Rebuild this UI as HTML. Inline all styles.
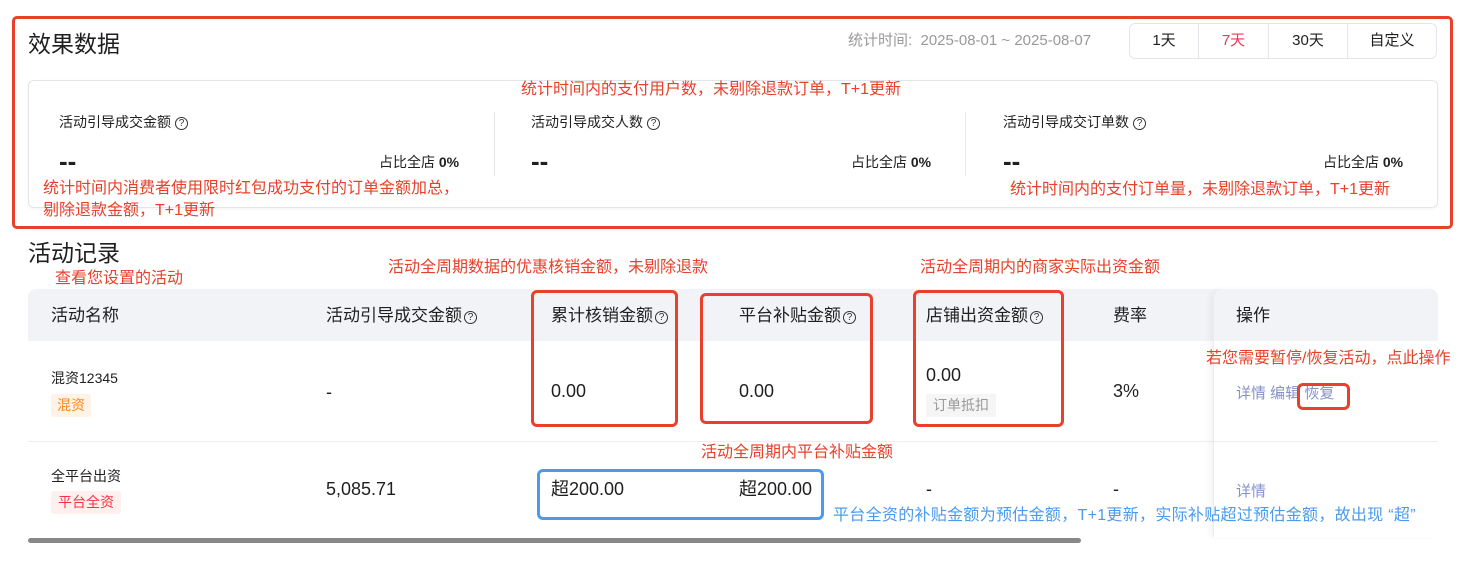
<!DOCTYPE html>
<html><head><meta charset="utf-8">
<style>
*{margin:0;padding:0;box-sizing:border-box}
body{width:1477px;height:563px;background:#fff;position:relative;overflow:hidden;font-family:"Liberation Sans","Noto Sans CJK SC",sans-serif;color:#1f1f1f}
.a{position:absolute;white-space:nowrap;line-height:1}
.red{color:#e8402a;font-size:16px}
.blue{color:#4a9af0;font-size:16px}
.q{display:inline-block;width:13px;height:13px;border:1px solid #333;border-radius:50%;font-size:10px;line-height:11px;text-align:center;vertical-align:1px;margin-left:4px;color:#333}
.rb{position:absolute;border:3px solid #e8402a;border-radius:6px}
.h{font-size:16px;top:307px}
.n{font-size:18px}
.lk{color:#8592c7;font-size:15px}
</style></head><body>
<div class="a" style="left:28px;top:33px;font-size:23px">效果数据</div>
<div class="a" style="left:848px;top:33px;font-size:15px;color:#999">统计时间:&nbsp; 2025-08-01 ~ 2025-08-07</div>
<div style="position:absolute;left:1129px;top:23px;width:308px;height:36px;border:1px solid #e5e6eb;border-radius:6px;display:flex;font-size:15px">
<div style="width:69px;text-align:center;line-height:34px;border-right:1px solid #e5e6eb">1天</div>
<div style="width:70px;text-align:center;line-height:34px;border-right:1px solid #e5e6eb;color:#f5335a">7天</div>
<div style="width:79px;text-align:center;line-height:34px;border-right:1px solid #e5e6eb">30天</div>
<div style="flex:1;text-align:center;line-height:34px">自定义</div>
</div>
<div style="position:absolute;left:28px;top:80px;width:1410px;height:128px;border:1px solid #e3e5ea;border-radius:6px;box-shadow:0 1px 3px rgba(0,0,0,.05)"></div>
<div style="position:absolute;left:494px;top:112px;width:1px;height:64px;background:#e8e8e8"></div>
<div style="position:absolute;left:965px;top:112px;width:1px;height:64px;background:#e8e8e8"></div>
<div class="a" style="left:59px;top:115px;font-size:14px">活动引导成交金额<span class="q">?</span></div>
<div class="a" style="left:531px;top:115px;font-size:14px">活动引导成交人数<span class="q">?</span></div>
<div class="a" style="left:1003px;top:115px;font-size:14px">活动引导成交订单数<span class="q">?</span></div>
<div class="a" style="left:59px;top:148px;font-size:26px;font-weight:bold">--</div>
<div class="a" style="left:531px;top:148px;font-size:26px;font-weight:bold">--</div>
<div class="a" style="left:1003px;top:148px;font-size:26px;font-weight:bold">--</div>
<div class="a" style="left:379px;top:155px;font-size:14px">占比全店 <b>0%</b></div>
<div class="a" style="left:851px;top:155px;font-size:14px">占比全店 <b>0%</b></div>
<div class="a" style="left:1323px;top:155px;font-size:14px">占比全店 <b>0%</b></div>
<div class="a red" style="left:521px;top:82px">统计时间内的支付用户数，未剔除退款订单，T+1更新</div>
<div class="a red" style="left:43px;top:181px">统计时间内消费者使用限时红包成功支付的订单金额加总，</div>
<div class="a red" style="left:43px;top:203px">剔除退款金额，T+1更新</div>
<div class="a red" style="left:1010px;top:182px">统计时间内的支付订单量，未剔除退款订单，T+1更新</div>
<div style="position:absolute;left:12px;top:16px;width:1441px;height:213px;border:3px solid #e8402a;border-radius:5px"></div>

<div class="a" style="left:28px;top:242px;font-size:23px">活动记录</div>
<div class="a red" style="left:55px;top:271px">查看您设置的活动</div>
<div class="a red" style="left:388px;top:260px">活动全周期数据的优惠核销金额，未剔除退款</div>
<div class="a red" style="left:920px;top:260px">活动全周期内的商家实际出资金额</div>

<div style="position:absolute;left:28px;top:289px;width:1410px;height:52px;background:#f2f3f7;border-radius:8px 8px 0 0"></div>
<div style="position:absolute;left:28px;top:441px;width:1410px;height:1px;background:#eeeeee"></div>
<div style="position:absolute;left:1213px;top:289px;width:225px;height:248px;border-left:1px solid #ececec;border-radius:10px 10px 0 0;box-shadow:-4px 0 6px rgba(0,0,0,.04)"></div>
<div style="position:absolute;left:1214px;top:289px;width:224px;height:52px;background:#f2f3f7;border-radius:10px 10px 0 0"></div>

<div class="a h" style="left:51px;font-size:17px">活动名称</div>
<div class="a h" style="left:326px;font-size:17px">活动引导成交金额<span class="q" style="margin-left:2px">?</span></div>
<div class="a h" style="left:551px;font-size:17px">累计核销金额<span class="q" style="margin-left:2px">?</span></div>
<div class="a h" style="left:739px;font-size:17px">平台补贴金额<span class="q" style="margin-left:2px">?</span></div>
<div class="a h" style="left:926px;font-size:17px">店铺出资金额<span class="q" style="margin-left:2px">?</span></div>
<div class="a h" style="left:1113px;font-size:17px">费率</div>
<div class="a h" style="left:1236px;font-size:17px">操作</div>

<div class="a" style="left:51px;top:371px;font-size:14px">混资12345</div>
<div class="a" style="left:51px;top:394px;width:40px;height:23px;line-height:23px;text-align:center;font-size:14px;background:#fff3e8;color:#ff8a1f;border-radius:3px">混资</div>
<div class="a n" style="left:326px;top:383px">-</div>
<div class="a n" style="left:551px;top:382px">0.00</div>
<div class="a n" style="left:739px;top:382px">0.00</div>
<div class="a n" style="left:926px;top:366px">0.00</div>
<div class="a" style="left:926px;top:394px;width:70px;height:23px;line-height:23px;text-align:center;font-size:14px;background:#f5f5f5;color:#999">订单抵扣</div>
<div class="a n" style="left:1113px;top:382px">3%</div>
<div class="a lk" style="left:1236px;top:386px">详情 编辑 恢复</div>

<div class="a" style="left:51px;top:469px;font-size:14px">全平台出资</div>
<div class="a" style="left:51px;top:491px;width:70px;height:23px;line-height:23px;text-align:center;font-size:14px;background:#fff0f0;color:#f5333f;border-radius:3px">平台全资</div>
<div class="a n" style="left:326px;top:480px">5,085.71</div>
<div class="a n" style="left:551px;top:480px">超200.00</div>
<div class="a n" style="left:739px;top:480px">超200.00</div>
<div class="a n" style="left:926px;top:480px">-</div>
<div class="a n" style="left:1113px;top:480px">-</div>
<div class="a lk" style="left:1236px;top:484px">详情</div>

<div style="position:absolute;left:28px;top:538px;width:1053px;height:5px;background:#888;border-radius:3px"></div>

<div class="rb" style="left:531px;top:290px;width:147px;height:137px"></div>
<div class="rb" style="left:700px;top:293px;width:173px;height:131px"></div>
<div class="rb" style="left:913px;top:290px;width:151px;height:137px"></div>
<div class="rb" style="left:1297px;top:383px;width:53px;height:27px"></div>
<div style="position:absolute;left:537px;top:469px;width:287px;height:51px;border:3px solid #4a9af0;border-radius:6px"></div>
<div class="a red" style="left:1206px;top:351px">若您需要暂停/恢复活动，点此操作</div>
<div class="a red" style="left:701px;top:445px">活动全周期内平台补贴金额</div>
<div class="a blue" style="left:833px;top:508px;letter-spacing:0.3px">平台全资的补贴金额为预估金额，T+1更新，实际补贴超过预估金额，故出现 “超”</div>
</body></html>
